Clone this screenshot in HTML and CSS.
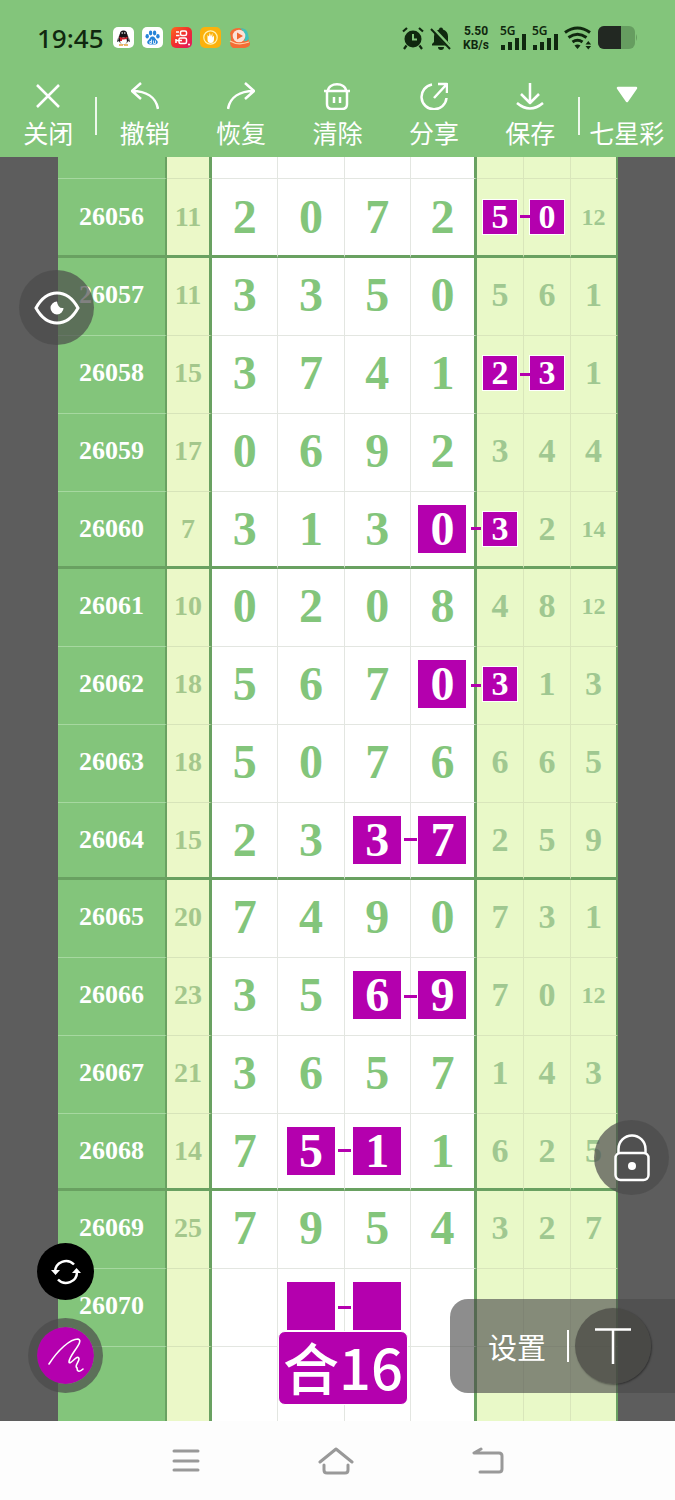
FILE: index.html
```html
<!DOCTYPE html>
<html lang="zh-CN">
<head>
    <meta charset="UTF-8">
    <meta name="viewport" content="width=device-width, initial-scale=1.0">
    <title>七星彩</title>
    <link rel="stylesheet" href="styles.css">
</head>
<body>
    <header class="header">
        <div class="status-bar">
            <span class="time">19:45</span>
            <div class="apps">
                <svg viewBox="0 0 21 21"><rect width="21" height="21" rx="5" fill="#fff"/><ellipse cx="10.5" cy="11.5" rx="5" ry="6" fill="#171217"/><circle cx="10.5" cy="7" r="3.6" fill="#171217"/><path d="M5 11l-1 4 2-1zM16 11l1 4-2-1z" fill="#171217"/><ellipse cx="10.5" cy="14" rx="3.4" ry="3.4" fill="#fff"/><path d="M6.5 9.5q4 2.5 8 0v2q-4 2-8 0zM7 11h2v3H7z" fill="#d3202d"/><path d="M6 18h4M11 18h4" stroke="#e9a33c" stroke-width="1.4"/><circle cx="9.2" cy="6" r=".8" fill="#fff"/><circle cx="11.8" cy="6" r=".8" fill="#fff"/></svg>
                <svg viewBox="0 0 21 21"><rect width="21" height="21" rx="5" fill="#fff"/><g fill="#2583d8"><ellipse cx="5.2" cy="9.2" rx="1.7" ry="2.3"/><ellipse cx="8.6" cy="6" rx="1.7" ry="2.4"/><ellipse cx="12.6" cy="6" rx="1.7" ry="2.4"/><ellipse cx="15.9" cy="9.2" rx="1.7" ry="2.3"/><path d="M10.5 9.6c2.400 0 2.600 2.400 4.300 3.700 1.900 1.600.8 4.200-1.500 4.200H7.700c-2.300 0-3.400-2.600-1.500-4.200 1.700-1.300 1.900-3.700 4.300-3.700z"/></g><path d="M9.500 12.500v4H7.800v-2h1.700M11.500 13.500v3h2v-3" fill="none" stroke="#fff" stroke-width=".8"/></svg>
                <svg viewBox="0 0 21 21"><defs><linearGradient id="red" x1="0" y1="0" x2="1" y2="1"><stop offset="0" stop-color="#ff6a1f"/><stop offset=".5" stop-color="#f02c2e"/><stop offset="1" stop-color="#e01765"/></linearGradient></defs><rect width="21" height="21" rx="5" fill="url(#red)"/><g fill="none" stroke="#fff" stroke-width="1.500"><rect x="9.500" y="4" width="6" height="4.500" rx="1.500"/><rect x="8" y="11" width="7.500" height="5.500" rx="1.500"/><path d="M5 5h3M5 8.500h3.500M5 12v4M5 13.500h6"/></g><circle cx="18" cy="17.500" r="1" fill="#fff"/></svg>
                <svg viewBox="0 0 21 21"><rect width="21" height="21" rx="5" fill="#fbb10c"/><circle cx="10.500" cy="10.500" r="6.700" fill="none" stroke="#fff3b5" stroke-width="1.200"/><path d="M7.500 8v4.500q0 3.500 3.300 3.500 2.900 0 3.200-3.500V8.500l-1.600 2V6l-1.500 3.500L9.800 5.500 9 9.500z" fill="#fff"/></svg>
                <svg viewBox="0 0 21 21"><path d="M1 6q2-5 9-5 8 0 9 8l1 6q2 0 1 3-1 2-5 3H4q-3-2-3-5 2-2 0-10z" fill="#f46c35"/><path d="M11 1q7 0 8 6l1 5q-3 3-5 2 3-7-4-13z" fill="#40c2ba"/><circle cx="10" cy="9" r="6.300" fill="#fbe3d8"/><path d="M8 5.500l6 3.500-6 3.500z" fill="#f0662f"/><path d="M1 14q8 5 19 1" fill="none" stroke="#ffd0a7" stroke-width="1.200"/></svg>
            </div>
            <div class="system">
                <svg width="22" height="24" viewBox="0 0 22 24"><circle cx="11" cy="13" r="8.500"/><path d="M1 5.500L5 2M21 5.500L17 2M4.500 19.500L2 23M17.500 19.500L20 23" stroke="#10280f" stroke-width="2.200"/><path d="M11 8v5.500h4" fill="none" stroke="#83c57b" stroke-width="2"/></svg>
                <svg width="22" height="24" viewBox="0 0 22 24"><path d="M11 1.500a2 2 0 0 1 2 2c3 1 5 3.500 5 7v5.500l2 2v1.500H2V18l2-2v-5.500c0-3.500 2-6 5-7a2 2 0 0 1 2-2zM8 21h6a3 3 0 0 1-6 0z"/><path d="M2.500 2.500L21 22" stroke="#83c57b" stroke-width="4"/><path d="M1 3L20 23" stroke="#10280f" stroke-width="2"/></svg>
                <div class="speed"><span>5.50</span><span>KB/s</span></div>
                <div class="signal"><span>5G</span><svg width="26" height="17" viewBox="0 0 26 17"><path d="M1 12h4v5H1zM8 9h4v8H8zM15 5h4v12h-4zM22 1h4v16h-4z"/></svg></div>
                <div class="signal"><span>5G</span><svg width="26" height="17" viewBox="0 0 26 17"><path d="M1 12h4v5H1zM8 9h4v8H8zM15 5h4v12h-4zM22 1h4v16h-4z"/></svg></div>
                <svg width="28" height="24" viewBox="0 0 28 24"><path d="M1 6.500q12.500-9 25 0M4.500 11.500q9-6.500 18 0M8.500 16q5-3.500 10 0" fill="none" stroke="#10280f" stroke-width="3"/><path d="M10.500 19.500q3-2 6 0l-3 3.500zM21.500 18.500l2.800-3.500 2.800 3.500zM21.500 20l2.800 3.500 2.800-3.500z"/></svg>
                <svg width="40" height="24" viewBox="0 0 40 24"><rect width="37" height="23" rx="6" fill="#669d60"/><path d="M38 8q2 3.500 0 7z" fill="#669d60"/><path d="M6 0h17v23H6a6 6 0 0 1-6-6V6a6 6 0 0 1 6-6z" fill="#222822"/></svg>
            </div>
        </div>
        <nav class="toolbar">
            <button type="button"><svg viewBox="0 0 28 28"><path d="M3 3l22 22M25 3L3 25"/></svg>关闭</button>
            <span class="divider"></span>
            <button type="button"><svg viewBox="0 0 28 28"><path d="M10 1L1 9l9 8M1 9c14 0 24 6 26 18"/></svg>撤销</button>
            <button type="button"><svg viewBox="0 0 28 28"><path d="M18 1l9 8-9 8M27 9C13 9 3 15 1 27"/></svg>恢复</button>
            <button type="button"><svg viewBox="0 0 28 28"><path d="M1 9h26M5 9c0-9 18-9 18 0M4 9v13q0 5 5 5h10q5 0 5-5V9M11 15v6M17 15v6"/></svg>清除</button>
            <button type="button"><svg viewBox="0 0 28 28"><path d="M12 2.500A12.500 12.500 0 1 0 26.500 16M14 16L26 3M18 2h9v9"/></svg>分享</button>
            <button type="button"><svg viewBox="0 0 28 28"><path d="M14 1v19M5 12l9 9 9-9M1 21q13 11 26 0"/></svg>保存</button>
            <span class="divider"></span>
            <button type="button"><svg viewBox="0 0 28 28"><path d="M5 6h18l-9 13z" fill="#fff"/></svg>七星彩</button>
        </nav>
    </header>

    <main class="board">
        <table class="draws">
            <colgroup>
                <col class="col-issue"><col class="col-sum">
                <col><col><col><col>
                <col class="col-small"><col class="col-small"><col class="col-small">
            </colgroup>
            <tbody>
                <tr class="first"><th></th><td></td><td></td><td></td><td></td><td></td><td></td><td></td><td></td></tr>
                <tr class="end"><th scope="row">26056</th><td>11</td><td>2</td><td>0</td><td>7</td><td>2</td><td class="link"><span class="mark">5</span></td><td><span class="mark">0</span></td><td class="two">12</td></tr>
                <tr><th scope="row">26057</th><td>11</td><td>3</td><td>3</td><td>5</td><td>0</td><td>5</td><td>6</td><td>1</td></tr>
                <tr><th scope="row">26058</th><td>15</td><td>3</td><td>7</td><td>4</td><td>1</td><td class="link"><span class="mark">2</span></td><td><span class="mark">3</span></td><td>1</td></tr>
                <tr><th scope="row">26059</th><td>17</td><td>0</td><td>6</td><td>9</td><td>2</td><td>3</td><td>4</td><td>4</td></tr>
                <tr class="end"><th scope="row">26060</th><td>7</td><td>3</td><td>1</td><td>3</td><td class="link"><span class="mark">0</span></td><td><span class="mark">3</span></td><td>2</td><td class="two">14</td></tr>
                <tr><th scope="row">26061</th><td>10</td><td>0</td><td>2</td><td>0</td><td>8</td><td>4</td><td>8</td><td class="two">12</td></tr>
                <tr><th scope="row">26062</th><td>18</td><td>5</td><td>6</td><td>7</td><td class="link"><span class="mark">0</span></td><td><span class="mark">3</span></td><td>1</td><td>3</td></tr>
                <tr><th scope="row">26063</th><td>18</td><td>5</td><td>0</td><td>7</td><td>6</td><td>6</td><td>6</td><td>5</td></tr>
                <tr class="end"><th scope="row">26064</th><td>15</td><td>2</td><td>3</td><td class="link"><span class="mark">3</span></td><td><span class="mark">7</span></td><td>2</td><td>5</td><td>9</td></tr>
                <tr><th scope="row">26065</th><td>20</td><td>7</td><td>4</td><td>9</td><td>0</td><td>7</td><td>3</td><td>1</td></tr>
                <tr><th scope="row">26066</th><td>23</td><td>3</td><td>5</td><td class="link"><span class="mark">6</span></td><td><span class="mark">9</span></td><td>7</td><td>0</td><td class="two">12</td></tr>
                <tr><th scope="row">26067</th><td>21</td><td>3</td><td>6</td><td>5</td><td>7</td><td>1</td><td>4</td><td>3</td></tr>
                <tr class="end"><th scope="row">26068</th><td>14</td><td>7</td><td class="link"><span class="mark">5</span></td><td><span class="mark">1</span></td><td>1</td><td>6</td><td>2</td><td>5</td></tr>
                <tr><th scope="row">26069</th><td>25</td><td>7</td><td>9</td><td>5</td><td>4</td><td>3</td><td>2</td><td>7</td></tr>
                <tr><th scope="row">26070</th><td></td><td></td><td class="link"><span class="mark"></span></td><td><span class="mark"></span></td><td></td><td></td><td></td><td></td></tr>
                <tr class="last"><th></th><td></td><td></td><td></td><td></td><td></td><td></td><td></td><td></td></tr>
            </tbody>
        </table>

        <div class="note">合16</div>

        <button type="button" class="round eye" aria-label="显示">
            <svg width="46" height="34" viewBox="0 0 46 34"><path d="M2 17C13-3 33-3 44 17 33 37 13 37 2 17z" fill="none" stroke="#fff" stroke-width="3"/><path d="M23 10.500a6.500 6.500 0 1 0 6.500 6.500q-5.500 1-6.500-6.500z" fill="#fff"/></svg>
        </button>
        <button type="button" class="round lock" aria-label="锁定">
            <svg width="36" height="48" viewBox="0 0 36 48"><g fill="none" stroke="#fff" stroke-width="2.500"><rect x="1.500" y="19" width="33" height="27" rx="5"/><path d="M4.500 19v-4a13.500 13.500 0 0 1 27 0v4"/></g><circle cx="18" cy="32" r="4" fill="#fff"/></svg>
        </button>
        <button type="button" class="round refresh" aria-label="切换">
            <svg width="30" height="26" viewBox="0 0 30 26"><g fill="none" stroke="#fff" stroke-width="2.500"><path d="M4 13A11 11 0 0 1 23 5.500M26 13A11 11 0 0 1 7 20.500"/></g><path d="M0 11h9l-4.500 5zM21 14h9l-4.500-5z" fill="#fff"/></svg>
        </button>
        <button type="button" class="round pen" aria-label="画笔">
            <svg width="36" height="36" viewBox="0 0 36 36"><path d="M1 26C10 12 22 1 30 1c7 2-9 16-9 23 1 4 9-9 10-3 0 3-5 7-2 9 0 3 2 5 6 1" fill="none" stroke="#fff" stroke-width="1.600" stroke-linecap="round"/></svg>
        </button>
        <div class="panel">
            <button type="button" class="settings">设置</button>
            <span class="bar"></span>
            <button type="button" class="text-tool" aria-label="文字">
                <svg width="36" height="36" viewBox="0 0 36 36"><path d="M0 1.500h36M18 1.500V36" stroke="#fff" stroke-width="2.500"/></svg>
            </button>
        </div>
    </main>

    <footer class="nav-bar">
        <button type="button" aria-label="菜单"><svg width="28" height="24" viewBox="0 0 28 24"><path d="M2 2h24M2 12h24M2 21h24"/></svg></button>
        <button type="button" aria-label="主页"><svg width="36" height="28" viewBox="0 0 36 28"><path d="M2 15L18 2l16 13M6 18v5q0 3 3 3h18q3 0 3-3v-5"/></svg></button>
        <button type="button" aria-label="返回"><svg width="32" height="28" viewBox="0 0 32 28"><path d="M9 2L2 6h25q3 0 3 3v13q0 3-3 3H8"/></svg></button>
    </footer>
</body>
</html>
```
FILE: styles.css
```css
* {
    box-sizing: border-box;
}

body {
    margin: 0;
    min-height: 100vh;
    display: flex;
    flex-direction: column;
    background-color: #fdfdfd;
    font-family: "Noto Sans CJK SC", sans-serif;
}

button {
    padding: 0;
    border: none;
    background: none;
    color: #fff;
    font-family: inherit;
    cursor: pointer;
}

svg {
    display: block;
    flex: none;
}

.header {
    background-color: #83c57b;
}

/* status bar */
.status-bar {
    display: flex;
    align-items: center;
    height: 75px;
    padding: 0 37px;
    color: #10280f;
    font-family: "Noto Sans", sans-serif;
}

.time {
    width: 76px;
    font-size: 26px;
    font-weight: 500;
}

.apps {
    display: flex;
    gap: 8px;
}

.apps svg {
    width: 21px;
    height: 21px;
}

.system {
    display: flex;
    align-items: center;
    gap: 6px;
    margin-left: auto;
    fill: #10280f;
}

.speed {
    display: flex;
    flex-direction: column;
    width: 32px;
    margin: 0 2px;
    font-family: Roboto, sans-serif;
    font-size: 12px;
    font-weight: bold;
    line-height: 14px;
    text-align: center;
}

.signal {
    height: 24px;
}

.signal span {
    display: block;
    height: 7px;
    font-size: 12px;
    font-weight: 600;
    line-height: 9px;
}

/* toolbar */
.toolbar {
    display: flex;
    align-items: center;
}

.toolbar button {
    flex: 1 0 0;
    display: flex;
    flex-direction: column;
    align-items: center;
    gap: 7px;
    padding: 7px 0 10px;
    font-size: 25px;
    line-height: 30px;
    white-space: nowrap;
}

.toolbar svg {
    width: 28px;
    height: 28px;
    fill: none;
    stroke: #fff;
    stroke-width: 2.5;
    stroke-linejoin: round;
}

.divider {
    width: 2px;
    height: 38px;
    margin: 0 -1px;
    background-color: #eef8ec;
}

/* chart */
.board {
    position: relative;
    flex: 1;
    padding: 0 57px 0 58px;
    background-color: #5d5d5d;
    overflow: hidden;
}

.draws {
    width: 100%;
    table-layout: fixed;
    border-collapse: separate;
    border-spacing: 0;
    background-color: #fff;
    font-family: "Liberation Serif", serif;
    font-weight: bold;
    line-height: 1;
    text-align: center;
}

.col-issue {
    width: 109px;
}

.col-sum {
    width: 45px;
}

.col-small {
    width: 47px;
}

.draws th,
.draws td {
    height: 78px;
    padding: 0 0 3px;
    border: 0 solid #e3e6e1;
    border-width: 0 1px 1px 0;
    color: #83c57b;
    font-size: 48px;
}

.draws th {
    border-right: 2px solid #69a161;
    border-bottom-color: #a6d8a0;
    background-color: #83c57b;
    color: #fff;
    font-size: 26px;
}

.draws td:nth-child(2) {
    border-right: 3px solid #69a161;
    border-bottom-color: #d7e4b9;
    background-color: #ebf8c8;
    color: #a4c78c;
    font-size: 28px;
}

.draws td:nth-child(6) {
    border-right: 3px solid #69a161;
}

.draws td:nth-child(n+7) {
    border-color: #d9e6bb;
    background-color: #e9f9c8;
    color: #a0c891;
    font-size: 34px;
}

.draws td:nth-child(9) {
    border-right: 2px solid #69a161;
}

.draws td.two:nth-child(9) {
    font-size: 24px;
}

.draws .end th,
.draws .end td,
.draws .end td:nth-child(n+7) {
    height: 77px;
    padding: 0;
    border-bottom: 3px solid #69a161;
}

.draws .end:nth-child(2) th,
.draws .end:nth-child(2) td {
    height: 79px;
}

.draws .first th,
.draws .first td {
    height: 22px;
}

.draws .last th,
.draws .last td {
    height: 74px;
    border-bottom: none;
}

.mark {
    display: block;
    width: 48px;
    height: 48px;
    margin: 0 auto;
    background-color: #b400ae;
    color: #fff;
    line-height: 48px;
}

td:nth-child(n+7) .mark {
    width: 36px;
    height: 36px;
    border: 1px solid #fff;
    line-height: 34px;
}

/* dash that joins two marked numbers */
.link {
    position: relative;
}

.link::after {
    content: "";
    position: absolute;
    top: 50%;
    right: -7px;
    width: 13px;
    height: 3px;
    margin-top: -2px;
    background-color: #b400ae;
}

.link:nth-child(n+6)::after {
    width: 10px;
}

.note {
    position: absolute;
    top: 1174px;
    left: 278px;
    padding: 0 4px 4px;
    border: 1px solid #fff;
    border-radius: 7px;
    background-color: #b400ae;
    color: #fff;
    font-size: 56px;
    font-weight: 500;
    line-height: 68px;
}

/* floating buttons */
.round {
    position: absolute;
    display: flex;
    align-items: center;
    justify-content: center;
    width: 75px;
    height: 75px;
    border-radius: 50%;
    background-color: rgba(75, 75, 75, 0.7);
}

.eye {
    top: 113px;
    left: 19px;
}

.lock {
    top: 963px;
    right: 6px;
}

.refresh {
    top: 1086px;
    left: 37px;
    width: 57px;
    height: 57px;
    background-color: #000;
}

.pen {
    top: 1161px;
    left: 28px;
    border: 9px solid rgba(75, 75, 75, 0.7);
    background-color: #b400ae;
    background-clip: padding-box;
}

.panel {
    position: absolute;
    top: 1142px;
    right: 0;
    display: flex;
    align-items: center;
    height: 94px;
    padding: 0 24px 0 38px;
    border-radius: 18px 0 0 18px;
    background-color: rgba(75, 75, 75, 0.63);
}

.settings {
    font-size: 29px;
}

.bar {
    width: 2px;
    height: 32px;
    margin: 0 6px 0 21px;
    background-color: #fff;
}

.text-tool {
    display: flex;
    align-items: center;
    justify-content: center;
    width: 76px;
    height: 76px;
    border-radius: 50%;
    background-color: rgba(70, 70, 65, 0.7);
    box-shadow: 1px 1px 2px rgba(0, 0, 0, 0.4);
}

/* system navigation */
.nav-bar {
    display: flex;
    justify-content: center;
    gap: 118px;
    height: 79px;
    background-color: #fdfdfd;
}

.nav-bar svg {
    fill: none;
    stroke: #999;
    stroke-width: 3;
    stroke-linecap: round;
    stroke-linejoin: round;
}
```
